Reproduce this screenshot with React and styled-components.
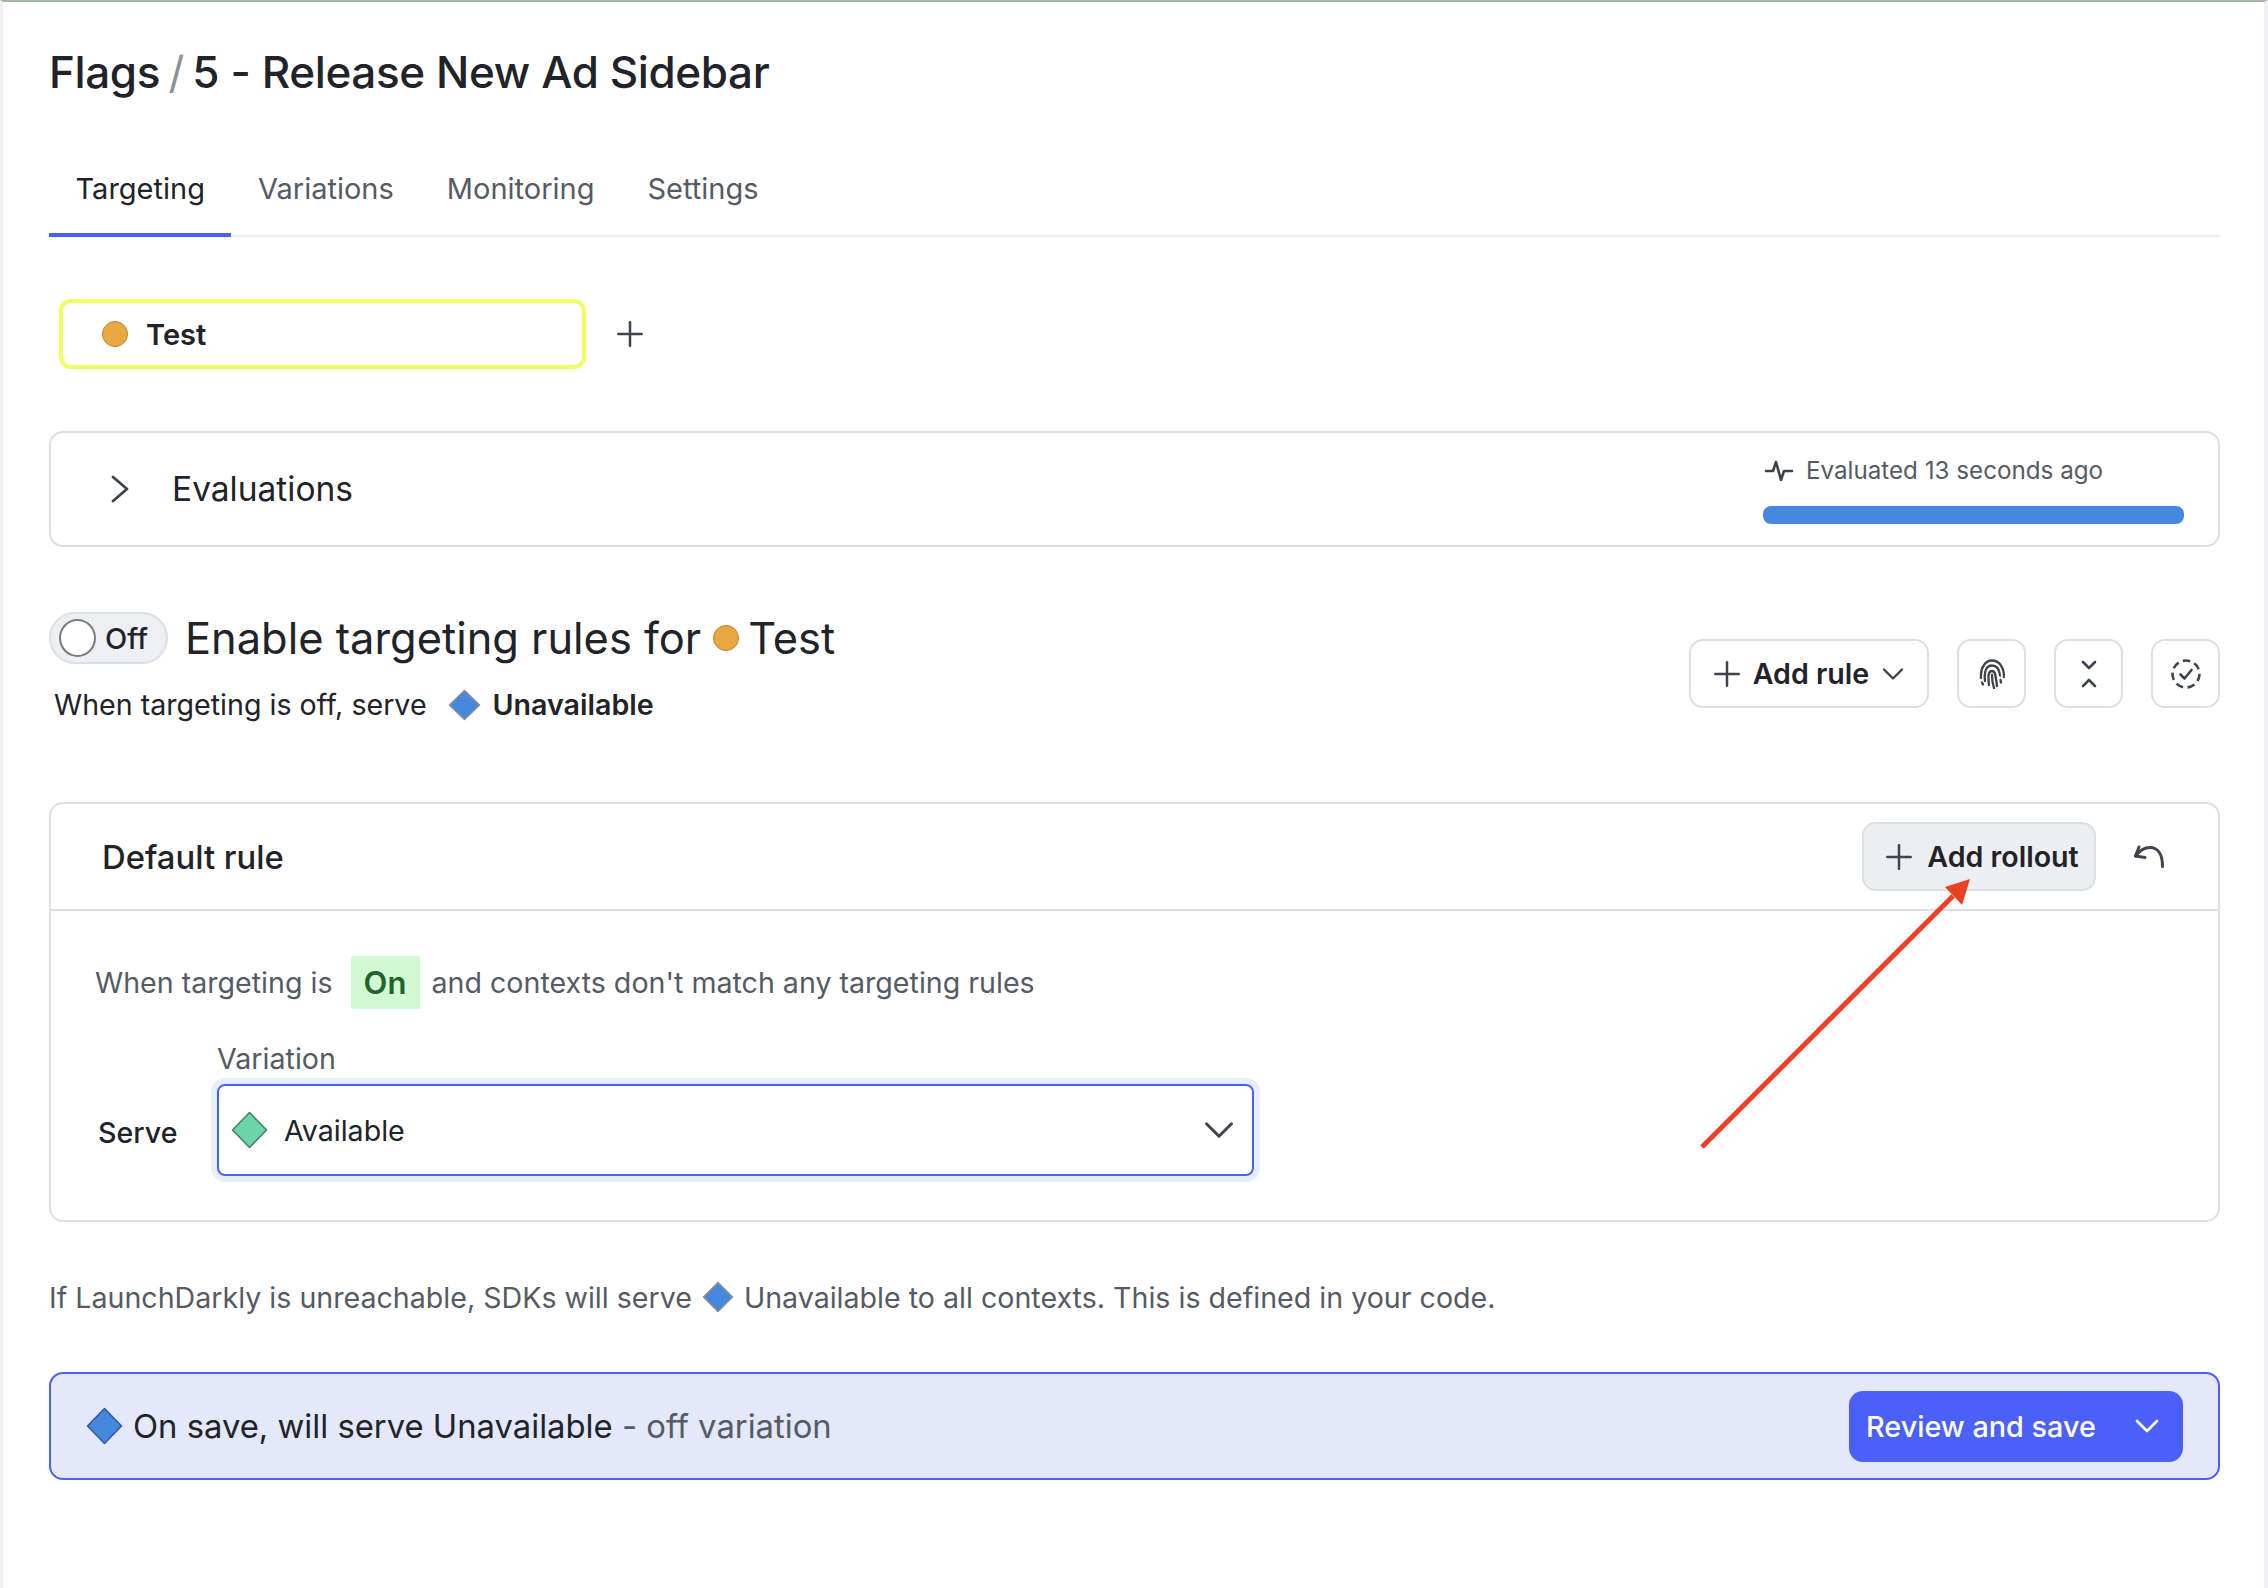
import React from 'react';
import styled, { createGlobalStyle } from 'styled-components';
import { Plus, ChevronDown } from 'lucide-react';

const Global = createGlobalStyle`
    html, body {
        margin: 0;
        padding: 0;
        background: #fff;
    }
    body {
        font-family: Inter, "Liberation Sans", sans-serif;
        color: #212329;
    }
`

const Frame = styled.div`
    position: relative;
    box-sizing: border-box;
    width: 2268px;
    height: 1588px;
    overflow: hidden;
    border-top: 2px solid #a4b9a4;
    border-left: 3px solid #f1f1f3;
    border-right: 4px solid #eeeef3;
    padding: 0 44px 0 46px;
`

const Title = styled.h1`
    margin: 40px 0 0;
    font-size: 44px;
    line-height: 60px;
    font-weight: 500;
    letter-spacing: -0.38px;
    color: #212329;
`

const Slash = styled.span`
    color: #8d9299;
    font-weight: 400;
    margin: 0 -3px;
`

const Tabs = styled.div`
    display: flex;
    margin-top: 55px;
    border-bottom: 2px solid #eeeef3;
`

const Tab = styled.div`
    padding: 0 26.5px;
    height: 80px;
    line-height: 64px;
    font-size: 29px;
    margin-bottom: -2px;
    box-sizing: border-box;
    color: ${props => props.active ? '#212329' : '#555b65'};
    border-bottom: 4px solid ${props => props.active ? '#4a60f7' : 'transparent'};
`

const EnvRow = styled.div`
    display: flex;
    align-items: center;
    margin-top: 62px;
    padding-left: 10px;
    gap: 24px;
    color: #3f444c;
`

const EnvTab = styled.div`
    box-sizing: border-box;
    width: 527px;
    height: 70px;
    border: 4px solid #f0ff60;
    border-radius: 12px;
    display: flex;
    align-items: center;
    padding-left: 39px;
    gap: 18px;
    font-size: 29px;
    font-weight: 600;
    color: #212329;
`

const Dot = styled.span`
    display: inline-block;
    flex: none;
    box-sizing: border-box;
    width: ${props => props.size}px;
    height: ${props => props.size}px;
    border-radius: 50%;
    background: #e9a842;
    border: 1px solid #b98434;
`

const HeadDot = styled(Dot)`
    margin-left: 3px;
`

const Card = styled.div`
    box-sizing: border-box;
    border: 2px solid #dcdfe5;
    border-radius: 14px;
`

const EvalCard = styled(Card)`
    margin-top: 62px;
    height: 116px;
    display: flex;
    justify-content: space-between;
    padding: 0 34px 0 59px;
`

const EvalLeft = styled.div`
    display: flex;
    align-items: center;
    gap: 42px;
    font-size: 33.5px;
    color: #212329;
`

const EvalRight = styled.div`
    width: 421px;
    padding-top: 22px;
`

const EvalText = styled.div`
    display: flex;
    align-items: center;
    gap: 12px;
    padding-left: 1px;
    font-size: 24.2px;
    line-height: 32px;
    color: #555b65;
`

const Bar = styled.div`
    height: 18px;
    margin-top: 19px;
    border-radius: 8px;
    background: #4688dd;
`

const Targeting = styled.div`
    display: flex;
    justify-content: space-between;
    margin-top: 64px;
    height: 191px;
`

const TargetHead = styled.div`
    display: flex;
    align-items: center;
    height: 54px;
`

const Toggle = styled.div`
    box-sizing: border-box;
    display: flex;
    align-items: center;
    gap: 9px;
    width: 119px;
    height: 52px;
    border: 2px solid #dcdfe5;
    border-radius: 26px;
    background: #eeeff3;
    padding-left: 8px;
    font-size: 29px;
    font-weight: 500;
    margin-right: 17px;
`

const Knob = styled.span`
    box-sizing: border-box;
    width: 37px;
    height: 38px;
    flex: none;
    border-radius: 50%;
    background: #fff;
    border: 2px solid #777b80;
`

const Heading = styled.div`
    display: flex;
    align-items: center;
    font-size: 43.4px;
    font-weight: 400;
    gap: 9px;
    white-space: nowrap;
`

const SubLine = styled.div`
    display: flex;
    align-items: center;
    margin-top: 20px;
    padding-left: 5px;
    font-size: 28.6px;
    line-height: 40px;
`

const Strong = styled.span`
    font-weight: 600;
`

const Actions = styled.div`
    display: flex;
    gap: 28px;
    padding-top: 28px;
`

const OutlineBtn = styled.div`
    box-sizing: border-box;
    height: 69px;
    width: ${props => props.wide ? '240px' : '69px'};
    display: flex;
    align-items: center;
    justify-content: center;
    gap: 6px;
    border: 2px solid #dcdfe5;
    border-radius: 14px;
    font-size: 28.6px;
    font-weight: 600;
    color: #212329;
`

const RuleCard = styled(Card)`
    margin-top: 0;
    height: 420px;
`

const RuleHeader = styled.div`
    box-sizing: border-box;
    height: 107px;
    border-bottom: 2px solid #dcdfe5;
    display: flex;
    align-items: center;
    justify-content: space-between;
    padding: 0 53px 0 51px;
    font-size: 32.8px;
    font-weight: 500;
`

const RolloutGroup = styled.div`
    display: flex;
    align-items: center;
    gap: 37px;
`

const RolloutBtn = styled.div`
    box-sizing: border-box;
    width: 234px;
    height: 69px;
    display: flex;
    align-items: center;
    justify-content: center;
    gap: 8px;
    background: #eceef2;
    border: 2px solid #dcdfe5;
    border-radius: 14px;
    font-size: 28.6px;
    font-weight: 600;
`

const RuleBody = styled.div`
    padding: 45px 0 0 44px;
`

const WhenLine = styled.div`
    display: flex;
    align-items: center;
    font-size: 28.6px;
    color: #555b65;
    height: 53px;
`

const OnBadge = styled.span`
    display: flex;
    align-items: center;
    justify-content: center;
    width: 69px;
    height: 53px;
    margin: 0 12px 0 18px;
    border-radius: 3px;
    background: #d2fad2;
    color: #24622f;
    font-weight: 600;
    font-size: 31px;
`

const ServeRow = styled.div`
    display: flex;
    align-items: flex-end;
    margin-top: 30px;
`

const ServeLabel = styled.div`
    width: 122px;
    padding-left: 3px;
    box-sizing: border-box;
    font-size: 28.6px;
    font-weight: 500;
    line-height: 40px;
    padding-bottom: 23px;
`

const FieldLabel = styled.div`
    font-size: 28.6px;
    line-height: 40px;
    color: #555b65;
    margin-bottom: 5px;
`

const Select = styled.div`
    box-sizing: border-box;
    width: 1037px;
    height: 92px;
    display: flex;
    align-items: center;
    padding: 0 8px 0 12px;
    gap: 16px;
    border: 2px solid #4a60f7;
    border-radius: 8px;
    box-shadow: 0 0 0 6px #e8effc;
    font-size: 28.6px;
`

const SelectText = styled.span`
    flex: 1;
`

const Note = styled.div`
    display: flex;
    align-items: center;
    margin-top: 55px;
    height: 40px;
    gap: 10px;
    font-size: 28.6px;
    color: #555b65;
    white-space: pre;
`

const SaveBanner = styled.div`
    box-sizing: border-box;
    height: 108px;
    margin-top: 55px;
    display: flex;
    align-items: center;
    justify-content: space-between;
    padding: 0 35px;
    background: #e4e8fb;
    border: 2px solid #4a60f7;
    border-radius: 14px;
`

const SaveText = styled.div`
    display: flex;
    align-items: center;
    gap: 10px;
    font-size: 32.8px;
    white-space: pre;
`

const Muted = styled.span`
    color: #555b65;
`

const SaveBtn = styled.div`
    box-sizing: border-box;
    width: 334px;
    height: 71px;
    display: flex;
    align-items: center;
    justify-content: space-between;
    padding: 0 16px 0 17px;
    border-radius: 14px;
    background: #4a60f7;
    color: #fff;
    font-size: 28.8px;
    font-weight: 500;
`

const ArrowOverlay = styled.svg`
    position: absolute;
    left: 1687px;
    top: 868px;
`

const Diamond = ({ w, h, fill, stroke }) => (
    <svg width={w} height={h} viewBox={`0 0 ${w} ${h}`} style={{ flex: 'none' }}>
        <path d={`M${w / 2} 1.5 L${w - 1.5} ${h / 2} L${w / 2} ${h - 1.5} L1.5 ${h / 2} Z`} fill={fill} stroke={stroke} strokeWidth="1.6" strokeLinejoin="round" />
    </svg>
)

const Pulse = () => (
    <svg width="30" height="24" viewBox="0 0 30 24" fill="none" stroke="#3f444c" strokeWidth="2.6" strokeLinecap="round" strokeLinejoin="round">
        <path d="M2 12h7l3-9 5 18 3-9h8" />
    </svg>
)

const Caret = () => (
    <svg width="20" height="28" viewBox="0 0 20 28" fill="none" stroke="#3f444c" strokeWidth="2.8" strokeLinecap="round" strokeLinejoin="round">
        <path d="M3 2l14 12L3 26" />
    </svg>
)

const FingerIcon = () => (
    <svg width="26" height="30" viewBox="0 0 26 30" fill="none" stroke="#3f444c" strokeWidth="2.3" strokeLinecap="round" strokeLinejoin="round">
        <path d="M2 19C1 8 7 1.500 13 1.500c7 0 12 6.500 12 16.500" />
        <path d="M6 22c-1-9 1-15.500 7-15.500 5 0 7.500 4.500 8 10" />
        <path d="M10 26c-1-8-1-14 3-14 3 0 3.500 4 4 8l1 7" />
        <path d="M13 16c0 5 .5 9 2 13" />
        <path d="M3 23.500l1 2" />
        <path d="M21.500 21l.5 2.500" />
    </svg>
)

const CollapseIcon = () => (
    <svg width="18" height="28" viewBox="0 0 18 28" fill="none" stroke="#3f444c" strokeWidth="2.6" strokeLinecap="round" strokeLinejoin="round">
        <path d="M3 2l6 6 6-6" />
        <path d="M3 26l6-6 6 6" />
    </svg>
)

const DashedCheck = () => (
    <svg width="32" height="32" viewBox="0 0 32 32" fill="none" stroke="#3f444c" strokeWidth="2.6" strokeLinejoin="round">
        <circle cx="16" cy="16" r="13.500" strokeDasharray="7.500 4.500" />
        <path d="M10.500 16.500l4 4 7-8.500" strokeLinecap="round" />
    </svg>
)

const UndoIcon = () => (
    <svg width="32" height="24" viewBox="0 0 32 24" fill="none" stroke="#3f444c" strokeWidth="3" strokeLinecap="round" strokeLinejoin="round">
        <path d="M6 2L2.500 11l9.500 1.500" />
        <path d="M2.500 11C7 5 12 2.500 17 2.500c8 0 12.500 7 12.500 19" />
    </svg>
)

const App = () => (
    <Frame>
        <Global />
        <Title>Flags <Slash>/</Slash> 5 - Release New Ad Sidebar</Title>

        <Tabs>
            <Tab active>Targeting</Tab>
            <Tab>Variations</Tab>
            <Tab>Monitoring</Tab>
            <Tab>Settings</Tab>
        </Tabs>

        <EnvRow>
            <EnvTab><Dot size={26} />Test</EnvTab>
            <Plus size={40} strokeWidth={1.5} />
        </EnvRow>

        <EvalCard>
            <EvalLeft>
                <Caret />
                Evaluations
            </EvalLeft>
            <EvalRight>
                <EvalText><Pulse />Evaluated 13 seconds ago</EvalText>
                <Bar />
            </EvalRight>
        </EvalCard>

        <Targeting>
            <div>
                <TargetHead>
                    <Toggle><Knob />Off</Toggle>
                    <Heading>Enable targeting rules for <HeadDot size={26} /> Test</Heading>
                </TargetHead>
                <SubLine>
                    When targeting is off, serve
                    <span style={{ width: 21 }} />
                    <Diamond w={33} h={32} fill="#4688dd" stroke="#8a8f96" />
                    <span style={{ width: 12 }} />
                    <Strong>Unavailable</Strong>
                </SubLine>
            </div>
            <Actions>
                <OutlineBtn wide><Plus size={40} strokeWidth={1.5} color="#3f444c" />Add rule<ChevronDown size={36} strokeWidth={1.6} color="#3f444c" /></OutlineBtn>
                <OutlineBtn><FingerIcon /></OutlineBtn>
                <OutlineBtn><CollapseIcon /></OutlineBtn>
                <OutlineBtn><DashedCheck /></OutlineBtn>
            </Actions>
        </Targeting>

        <RuleCard>
            <RuleHeader>
                Default rule
                <RolloutGroup>
                    <RolloutBtn><Plus size={40} strokeWidth={1.5} color="#3f444c" />Add rollout</RolloutBtn>
                    <UndoIcon />
                </RolloutGroup>
            </RuleHeader>
            <RuleBody>
                <WhenLine>When targeting is <OnBadge>On</OnBadge> and contexts don't match any targeting rules</WhenLine>
                <ServeRow>
                    <ServeLabel>Serve</ServeLabel>
                    <div>
                        <FieldLabel>Variation</FieldLabel>
                        <Select>
                            <Diamond w={37} h={38} fill="#6dd3a9" stroke="#3f8567" />
                            <SelectText>Available</SelectText>
                            <ChevronDown size={50} strokeWidth={1.45} color="#3f444c" />
                        </Select>
                    </div>
                </ServeRow>
            </RuleBody>
        </RuleCard>

        <Note>
            If LaunchDarkly is unreachable, SDKs will serve
            <Diamond w={32} h={32} fill="#4688dd" stroke="#8a8f96" />
            Unavailable to all contexts. This is defined in your code.
        </Note>

        <SaveBanner>
            <SaveText>
                <Diamond w={37} h={38} fill="#4688dd" stroke="#2a5d9c" />
                <span>On save, will serve Unavailable <Muted>- off variation</Muted></span>
            </SaveText>
            <SaveBtn>Review and save<ChevronDown size={40} strokeWidth={1.6} /></SaveBtn>
        </SaveBanner>

        <ArrowOverlay width="300" height="290" viewBox="0 0 300 290">
            <path d="M12 277 L263 26" stroke="#ea4025" strokeWidth="5" fill="none" />
            <path d="M280 9 L255 17 L272 35 Z" fill="#ea4025" />
        </ArrowOverlay>
    </Frame>
)

export default App;
